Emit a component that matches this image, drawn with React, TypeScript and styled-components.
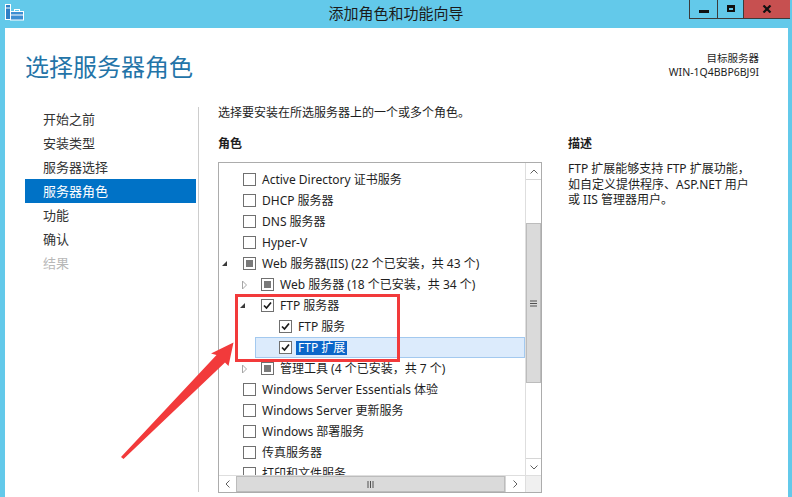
import React from "react";
import styled, { createGlobalStyle, css } from "styled-components";

const GlobalStyle = createGlobalStyle`
  html, body {
    margin: 0;
    padding: 0;
    overflow: hidden;
    background: #63c9ea;
  }
  body {
    font-family: "Noto Sans", "Noto Sans CJK SC", sans-serif;
    color: #1e1e1e;
  }
`;

type Check = "off" | "on" | "mixed";
type Expander = "none" | "open" | "closed";

interface Role {
  label: string;
  level: number;
  check: Check;
  expander: Expander;
  selected?: boolean;
}

const roles: Role[] = [
  { label: "Active Directory 证书服务", level: 0, check: "off", expander: "none" },
  { label: "DHCP 服务器", level: 0, check: "off", expander: "none" },
  { label: "DNS 服务器", level: 0, check: "off", expander: "none" },
  { label: "Hyper-V", level: 0, check: "off", expander: "none" },
  { label: "Web 服务器(IIS) (22 个已安装，共 43 个)", level: 0, check: "mixed", expander: "open" },
  { label: "Web 服务器 (18 个已安装，共 34 个)", level: 1, check: "mixed", expander: "closed" },
  { label: "FTP 服务器", level: 1, check: "on", expander: "open" },
  { label: "FTP 服务", level: 2, check: "on", expander: "none" },
  { label: "FTP 扩展", level: 2, check: "on", expander: "none", selected: true },
  { label: "管理工具 (4 个已安装，共 7 个)", level: 1, check: "mixed", expander: "closed" },
  { label: "Windows Server Essentials 体验", level: 0, check: "off", expander: "none" },
  { label: "Windows Server 更新服务", level: 0, check: "off", expander: "none" },
  { label: "Windows 部署服务", level: 0, check: "off", expander: "none" },
  { label: "传真服务器", level: 0, check: "off", expander: "none" },
  { label: "打印和文件服务", level: 0, check: "off", expander: "none" },
];

const steps = [
  { label: "开始之前", state: "done" },
  { label: "安装类型", state: "done" },
  { label: "服务器选择", state: "done" },
  { label: "服务器角色", state: "current" },
  { label: "功能", state: "done" },
  { label: "确认", state: "done" },
  { label: "结果", state: "disabled" },
] as const;

const App = () => {
  return (
    <>
      <GlobalStyle />
      <Window>
        <TitleBar>
          <AppIcon width="20" height="17" viewBox="0 0 20 17">
            <rect x="0.5" y="0.5" width="5" height="15" fill="#2f7fc6" stroke="#ffffff" />
            <line x1="1" y1="4" x2="5" y2="4" stroke="#ffffff" />
            <rect x="5.5" y="7.5" width="13" height="8.5" fill="#3d8fd2" stroke="#ffffff" />
            <rect x="9.5" y="5.5" width="5" height="2" fill="none" stroke="#ffffff" />
            <line x1="6" y1="11" x2="18" y2="11" stroke="#ffffff" />
          </AppIcon>
          <Title>添加角色和功能向导</Title>
          <Controls>
            <CtrlButton $w={28}>
              <MinGlyph />
            </CtrlButton>
            <CtrlButton $w={26}>
              <MaxGlyph />
            </CtrlButton>
            <CloseButton>
              <svg width="10" height="8" viewBox="0 0 10 8">
                <path d="M1.5 0.5 L8.5 7.5 M8.5 0.5 L1.5 7.5" stroke="#111" strokeWidth="2.2" />
              </svg>
            </CloseButton>
          </Controls>
        </TitleBar>

        <Client>
          <Header>
            <PageTitle>选择服务器角色</PageTitle>
            <TargetServer>
              <div>目标服务器</div>
              <div>WIN-1Q4BBP6BJ9I</div>
            </TargetServer>
          </Header>

          <Body>
            <Nav>
              {steps.map((s) => (
                <NavItem key={s.label} $state={s.state}>
                  {s.label}
                </NavItem>
              ))}
            </Nav>
            <Divider />
            <Main>
              <Intro>选择要安装在所选服务器上的一个或多个角色。</Intro>
              <Columns>
                <RolesColumn>
                  <SectionLabel>角色</SectionLabel>
                  <ListBox>
                    <Rows>
                      {roles.map((r) => (
                        <Row key={r.label} $level={r.level}>
                          <RowBody $selected={!!r.selected}>
                            <ExpanderSlot>
                              {r.expander === "open" && (
                                <svg width="8" height="8" viewBox="0 0 8 8">
                                  <polygon points="6,1 6,6 1,6" fill="#3a3a3a" />
                                </svg>
                              )}
                              {r.expander === "closed" && (
                                <svg width="8" height="10" viewBox="0 0 8 10">
                                  <polygon points="3.5,1 7.5,5 3.5,9" fill="none" stroke="#a6a6a6" />
                                </svg>
                              )}
                            </ExpanderSlot>
                            <CheckBox>
                              {r.check === "on" && (
                                <svg width="11" height="11" viewBox="0 0 11 11">
                                  <path d="M2 5.5 L4.5 8 L9 2.5" fill="none" stroke="#1a1a1a" strokeWidth="1.7" />
                                </svg>
                              )}
                              {r.check === "mixed" && <MixedMark />}
                            </CheckBox>
                            <RowLabel $selected={!!r.selected}>{r.label}</RowLabel>
                          </RowBody>
                        </Row>
                      ))}
                    </Rows>
                    <VScroll>
                      <ArrowBtn $side="top">
                        <svg width="8" height="5" viewBox="0 0 8 5">
                          <polyline points="0.5,4.5 4,1 7.5,4.5" fill="none" stroke="#606060" />
                        </svg>
                      </ArrowBtn>
                      <VTrack>
                        <VThumb>
                          <svg width="7" height="7" viewBox="0 0 7 7">
                            <path d="M0 1 H7 M0 3.5 H7 M0 6 H7" stroke="#505050" />
                          </svg>
                        </VThumb>
                      </VTrack>
                      <ArrowBtn $side="bottom">
                        <svg width="8" height="5" viewBox="0 0 8 5">
                          <polyline points="0.5,0.5 4,4 7.5,0.5" fill="none" stroke="#606060" />
                        </svg>
                      </ArrowBtn>
                    </VScroll>
                    <HScroll>
                      <HArrow $side="left">
                        <svg width="5" height="8" viewBox="0 0 5 8">
                          <polyline points="4.5,0.5 1,4 4.5,7.5" fill="none" stroke="#606060" />
                        </svg>
                      </HArrow>
                      <HThumb>
                        <svg width="7" height="7" viewBox="0 0 7 7">
                          <path d="M1 0 V7 M3.5 0 V7 M6 0 V7" stroke="#505050" />
                        </svg>
                      </HThumb>
                      <HArrow $side="right">
                        <svg width="5" height="8" viewBox="0 0 5 8">
                          <polyline points="0.5,0.5 4,4 0.5,7.5" fill="none" stroke="#606060" />
                        </svg>
                      </HArrow>
                    </HScroll>
                    <Corner />
                  </ListBox>
                </RolesColumn>
                <DescColumn>
                  <SectionLabel>描述</SectionLabel>
                  <DescText>
                    FTP 扩展能够支持 FTP 扩展功能，
                    <br />
                    如自定义提供程序、ASP.NET 用户
                    <br />
                    或 IIS 管理器用户。
                  </DescText>
                </DescColumn>
              </Columns>
            </Main>
          </Body>
        </Client>

        <Annotation width="792" height="497" viewBox="0 0 792 497">
          <rect x="236.5" y="295.5" width="162" height="65" fill="none" stroke="#f23a3b" strokeWidth="3" />
          <polygon
            points="121,457 216.5,355 211,353.5 233.5,342.5 228.5,366 225,362.5 123.5,459"
            fill="#f23a3b"
          />
        </Annotation>
      </Window>
    </>
  );
};

export default App;

const Window = styled.div`
  position: relative;
  width: 792px;
  height: 497px;
  background: #63c9ea;
  display: flex;
  flex-direction: column;
  overflow: hidden;
`;

const TitleBar = styled.div`
  height: 28px;
  flex-shrink: 0;
  display: grid;
  grid-template-columns: 1fr auto 1fr;
  align-items: start;
`;

const AppIcon = styled.svg`
  margin: 4px 0 0 5px;
`;

const Title = styled.div`
  font-family: "Noto Sans CJK SC", sans-serif;
  font-size: 15px;
  line-height: 26px;
  color: #1b1b1b;
`;

const Controls = styled.div`
  justify-self: end;
  margin-right: 2px;
  display: flex;
  height: 18px;
  border-left: 1px solid #3b3b3b;
  border-bottom: 1px solid #3b3b3b;
`;

const CtrlButton = styled.div<{ $w: number }>`
  width: ${(p) => p.$w - 1}px;
  border-right: 1px solid #3b3b3b;
  display: flex;
  align-items: center;
  justify-content: center;
`;

const MinGlyph = styled.div`
  width: 10px;
  height: 3px;
  margin-top: 5px;
  background: #111;
`;

const MaxGlyph = styled.div`
  width: 8px;
  height: 7px;
  box-sizing: border-box;
  border: 2px solid #111;
  border-top-width: 3px;
  margin-top: -1px;
`;

const CloseButton = styled.div`
  width: 46px;
  background: #c75050;
  display: flex;
  align-items: center;
  justify-content: center;
`;

const Client = styled.div`
  flex: 1;
  margin: 0 4px 0 5px;
  background: #ffffff;
  display: flex;
  flex-direction: column;
  min-height: 0;
`;

const Header = styled.div`
  display: flex;
  justify-content: space-between;
  align-items: flex-start;
  padding: 22px 29px 0 20px;
`;

const PageTitle = styled.h1`
  margin: 0;
  font-family: "Noto Sans CJK SC", sans-serif;
  font-weight: 400;
  font-size: 24px;
  line-height: 32px;
  color: #2374a8;
`;

const TargetServer = styled.div`
  margin-top: 1px;
  text-align: right;
  font-size: 10.5px;
  line-height: 14px;
  color: #1e1e1e;
`;

const Body = styled.div`
  flex: 1;
  display: flex;
  margin-top: 22px;
  min-height: 0;
`;

const Nav = styled.nav`
  width: 171px;
  margin-left: 20px;
  padding-top: 3px;
  display: flex;
  flex-direction: column;
`;

const NavItem = styled.div<{ $state: "done" | "current" | "disabled" }>`
  height: 24px;
  line-height: 24px;
  padding-left: 18px;
  font-size: 13px;
  color: #333333;
  ${(p) =>
    p.$state === "current" &&
    css`
      background: #0072c6;
      color: #ffffff;
    `}
  ${(p) =>
    p.$state === "disabled" &&
    css`
      color: #b8b8b8;
    `}
`;

const Divider = styled.div`
  width: 1px;
  margin: 3px 0 5px 2px;
  background: #cdcdcd;
`;

const Main = styled.div`
  flex: 1;
  padding-left: 19px;
  font-size: 12px;
  display: flex;
  flex-direction: column;
`;

const Intro = styled.div`
  line-height: 18px;
`;

const Columns = styled.div`
  display: flex;
  margin-top: 13px;
`;

const RolesColumn = styled.div`
  width: 324px;
  display: flex;
  flex-direction: column;
`;

const SectionLabel = styled.div`
  font-weight: 700;
  line-height: 18px;
`;

const ListBox = styled.div`
  margin-top: 9px;
  width: 324px;
  height: 331px;
  box-sizing: border-box;
  border: 1px solid #acacac;
  display: grid;
  grid-template-columns: 1fr 16px;
  grid-template-rows: 1fr 17px;
  background: #ffffff;
`;

const Rows = styled.div`
  overflow: hidden;
  padding-top: 6px;
  min-height: 0;
`;

const Row = styled.div<{ $level: number }>`
  height: 21px;
  display: flex;
  padding-left: ${(p) => p.$level * 18}px;
`;

const RowBody = styled.div<{ $selected: boolean }>`
  flex: 1;
  display: flex;
  align-items: center;
  ${(p) =>
    p.$selected &&
    css`
      background: #dcebfc;
      box-shadow: inset 0 0 0 1px #a3c9ef;
    `}
`;

const ExpanderSlot = styled.div`
  width: 24px;
  height: 21px;
  flex-shrink: 0;
  display: flex;
  align-items: center;
  padding-left: 2px;
  box-sizing: border-box;
`;

const CheckBox = styled.div`
  width: 13px;
  height: 13px;
  box-sizing: border-box;
  border: 1px solid #707070;
  background: #ffffff;
  flex-shrink: 0;
  margin-right: 6px;
  display: flex;
  align-items: center;
  justify-content: center;
`;

const MixedMark = styled.div`
  width: 7px;
  height: 7px;
  background: #7a7a7a;
`;

const RowLabel = styled.span<{ $selected: boolean }>`
  white-space: nowrap;
  line-height: 14px;
  color: #1e1e1e;
  ${(p) =>
    p.$selected &&
    css`
      background: #0b66c9;
      color: #ffffff;
      margin-left: -2px;
      padding: 0 2px;
    `}
`;

const VScroll = styled.div`
  display: flex;
  flex-direction: column;
  border-left: 1px solid #dedede;
  background: #ffffff;
`;

const ArrowBtn = styled.div<{ $side: "top" | "bottom" }>`
  height: 16px;
  flex-shrink: 0;
  display: flex;
  align-items: center;
  justify-content: center;
  ${(p) =>
    p.$side === "top"
      ? css`
          border-bottom: 1px solid #d6d6d6;
        `
      : css`
          border-top: 1px solid #d6d6d6;
        `}
`;

const VTrack = styled.div`
  flex: 1;
  padding-top: 43px;
`;

const VThumb = styled.div`
  height: 160px;
  box-sizing: border-box;
  background: #dadada;
  border: 1px solid #bcbcbc;
  display: flex;
  align-items: center;
  justify-content: center;
`;

const HScroll = styled.div`
  display: flex;
  border-top: 1px solid #dedede;
  background: #ffffff;
`;

const HArrow = styled.div<{ $side: "left" | "right" }>`
  width: ${(p) => (p.$side === "left" ? 17 : 19)}px;
  flex-shrink: 0;
  display: flex;
  align-items: center;
  justify-content: center;
  ${(p) =>
    p.$side === "right" &&
    css`
      border-left: 1px solid #d6d6d6;
    `}
`;

const HThumb = styled.div`
  flex: 1;
  box-sizing: border-box;
  background: #dadada;
  border: 1px solid #bcbcbc;
  display: flex;
  align-items: center;
  justify-content: center;
`;

const Corner = styled.div`
  background: #f0f0f0;
  border-top: 1px solid #dedede;
  border-left: 1px solid #dedede;
`;

const DescColumn = styled.div`
  margin-left: 26px;
  display: flex;
  flex-direction: column;
`;

const DescText = styled.div`
  margin-top: 8px;
  line-height: 15.5px;
  color: #1e1e1e;
`;

const Annotation = styled.svg`
  position: absolute;
  left: 0;
  top: 0;
  pointer-events: none;
`;
